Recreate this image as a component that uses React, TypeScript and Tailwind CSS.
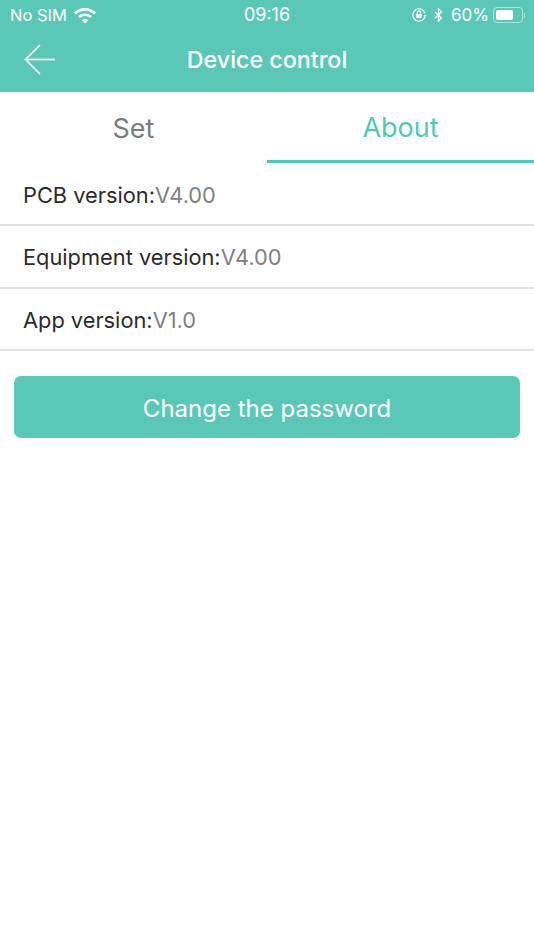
const versions = [
  { label: "PCB version:", value: "V4.00" },
  { label: "Equipment version:", value: "V4.00" },
  { label: "App version:", value: "V1.0" },
];

function StatusBar() {
  return (
    <div className="flex h-[30px] items-center justify-between pl-[10px] pr-[9px] text-[16.5px] leading-none text-white">
      <div className="flex items-center gap-[7px]">
        <span>No SIM</span>
        <svg width="22" height="17" viewBox="0 0 22 17" fill="none" stroke="white" strokeWidth="2.6">
          <path d="M1 6.5 C6.5 1 15.5 1 21 6.5" />
          <path d="M4.8 10 C8 7 14 7 17.2 10" />
          <path d="M11 16.5 L7.6 13.2 C9.6 11.6 12.4 11.6 14.4 13.2 Z" fill="white" stroke="none" />
        </svg>
      </div>
      <span className="absolute left-1/2 -translate-x-1/2 text-[18px]">09:16</span>
      <div className="flex items-center">
        <svg width="16" height="16" viewBox="0 0 16 16" fill="none" stroke="white" strokeWidth="1.2">
          <path d="M14 9.5 A6.2 6.2 0 1 1 14 6.5" />
          <path d="M12.6 8 L14.2 9.8 L15.8 8" fill="white" stroke="none" />
          <rect x="5.3" y="7" width="5.4" height="4" fill="white" stroke="none" />
          <path d="M6.3 7 V5.8 A1.7 1.7 0 0 1 9.7 5.8 V7" />
        </svg>
        <svg className="ml-[7px]" width="9" height="14" viewBox="0 0 9 14" fill="none" stroke="white" strokeWidth="1.2">
          <path d="M1 4 L7.5 10 L4.5 13 V1 L7.5 4 L1 10" />
        </svg>
        <span className="ml-[8px] text-[17px]">60%</span>
        <div className="ml-[4px] flex items-center">
          <div className="flex h-[16px] w-[30px] items-center rounded-[4px] border border-white/50 p-[2px]">
            <div className="h-full w-[17px] rounded-[2px] bg-white" />
          </div>
          <div className="ml-[1px] h-[5px] w-[1px] bg-white/50" />
        </div>
      </div>
    </div>
  );
}

export default function App() {
  return (
    <div className="relative h-[950px] w-[534px] overflow-hidden bg-white font-['Inter',sans-serif]">
      <div className="h-[92px] bg-[#5bc8b7]">
        <StatusBar />
        <div className="relative flex h-[62px] items-center justify-center pb-[2px]">
          <svg className="absolute left-[24px] top-[14px]" width="32" height="32" viewBox="0 0 32 32" fill="none" stroke="white" strokeWidth="1.7">
            <path d="M16 1 L1.5 15.5 L16 30" />
            <path d="M1.5 15.5 H31" />
          </svg>
          <span className="text-[23.3px] font-medium text-white">Device control</span>
        </div>
      </div>

      <div className="flex h-[71px] text-[27px]">
        <div className="flex flex-1 items-center justify-center pt-[4px] text-[#7b7b7b]">Set</div>
        <div className="flex flex-1 items-center justify-center border-b-[3px] border-[#4fc9b6] pt-[4px] text-[#4fc9b6]">About</div>
      </div>

      <div className="mt-[1px]">
        {versions.map((row) => (
          <div key={row.label} className="flex h-[62.4px] items-center border-b-2 border-[#e2e2e2] pl-[23px] pt-[2px] text-[21.8px]">
            <span className="text-[#2b2b2b]">{row.label}</span>
            <span className="text-[#808080]">{row.value}</span>
          </div>
        ))}
      </div>

      <div className="px-[14px] pt-[25px]">
        <button className="flex h-[62px] w-full items-center justify-center rounded-[7px] bg-[#5bc8b7] pt-[3px] text-[24px] text-white">
          Change the password
        </button>
      </div>
    </div>
  );
}
